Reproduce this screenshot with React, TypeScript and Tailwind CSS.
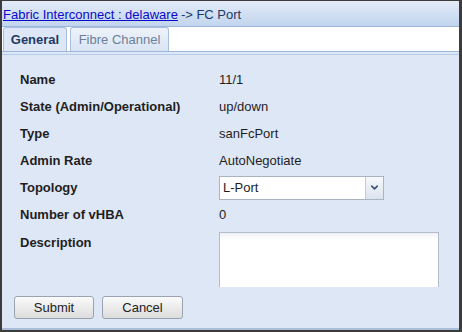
import { ChevronDown } from 'lucide-react';

const rows: { label: string; value: string }[] = [
  { label: 'Name', value: '11/1' },
  { label: 'State (Admin/Operational)', value: 'up/down' },
  { label: 'Type', value: 'sanFcPort' },
  { label: 'Admin Rate', value: 'AutoNegotiate' },
];

export default function App() {
  return (
    <div className="w-[462px] h-[332px] bg-[#3c3c3c] pl-[2px] pr-[3px] pb-[2px] pt-[1px] font-['Liberation_Sans',Arial,sans-serif] text-[13px] text-[#1e1e1e]">
      <div className="flex h-full flex-col overflow-hidden bg-[#dee7f5]">
        {/* title bar */}
        <div className="flex h-[26px] items-center border-b border-[#9db6dd] bg-gradient-to-b from-[#e3ebf7] to-[#c2d5ee] pl-[1px] pt-[3px]">
          <span className="text-[#0a0acc] underline">Fabric Interconnect : delaware</span>
          <span className="ml-[3px] text-[#1b3a6b]">-&gt; FC Port</span>
        </div>

        {/* tabs */}
        <div className="flex h-[25px] items-end gap-[3px] border-b border-[#9db6dd] bg-white pl-[1px]">
          <div className="flex h-[24px] w-[64px] items-center justify-center rounded-t-[3px] border border-b-0 border-[#a8bfe0] bg-[#dee7f5] font-bold text-[#1e3a64]">
            General
          </div>
          <div className="flex h-[24px] w-[99px] items-center justify-center rounded-t-[3px] border border-b-0 border-[#a8bfe0] bg-gradient-to-b from-[#eef3fa] to-[#d9e4f3] text-[#6d7f99]">
            Fibre Channel
          </div>
        </div>
        <div className="h-[3px] border-b border-[#b7cae6] bg-[#dee7f5]" />

        {/* form */}
        <div className="flex flex-1 flex-col pl-[18px] pt-[11px]">
          {rows.map((r) => (
            <div key={r.label} className="flex h-[27px] items-center">
              <div className="w-[199px] font-bold">{r.label}</div>
              <div>{r.value}</div>
            </div>
          ))}
          <div className="flex h-[27px] items-center">
            <div className="w-[199px] font-bold">Topology</div>
            <div className="flex h-[24px] w-[165px] items-center border border-[#a9b3c2] bg-white">
              <span className="flex-1 pl-[3px]">L-Port</span>
              <span className="flex h-full w-[18px] items-center justify-center border-l border-[#c4ccd8] bg-gradient-to-b from-[#f7f9fc] to-[#dbe3ee]">
                <ChevronDown className="h-[11px] w-[11px] text-[#3a5275]" strokeWidth={3.5} />
              </span>
            </div>
          </div>
          <div className="flex h-[27px] items-center">
            <div className="w-[199px] font-bold">Number of vHBA</div>
            <div>0</div>
          </div>
          <div className="mt-[4px] flex h-[55px]">
            <div className="w-[199px] pt-[1px] font-bold">Description</div>
            <div className="h-[55px] w-[220px] border border-b-0 border-[#b3bccb] bg-gradient-to-b from-[#eef1f4] to-white to-[12%]" />
          </div>
          <div className="-ml-[6px] mt-[9px] flex gap-[8px]">
            <button className="h-[23px] w-[80px] rounded-[3px] border border-[#9aa3b0] bg-gradient-to-b from-[#fbfbfb] to-[#dcdcdc] text-[13px] text-[#222]">
              Submit
            </button>
            <button className="h-[23px] w-[81px] rounded-[3px] border border-[#9aa3b0] bg-gradient-to-b from-[#fbfbfb] to-[#dcdcdc] text-[13px] text-[#222]">
              Cancel
            </button>
          </div>
        </div>
        <div className="h-[2px] bg-[#a9bdd8]" />
      </div>
    </div>
  );
}
